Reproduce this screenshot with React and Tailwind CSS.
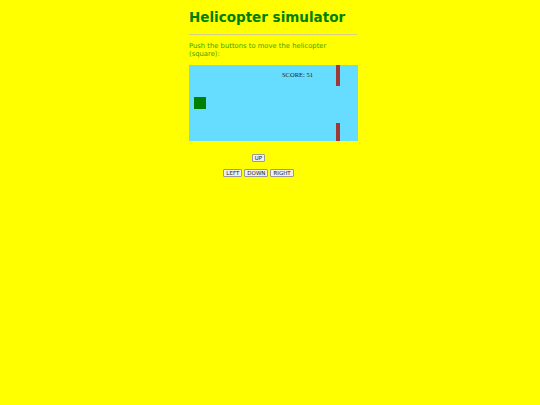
export default function App() {
    const moves = ['LEFT', 'DOWN', 'RIGHT'];
    const btn = 'h-[8px] rounded-[1px] border border-[#9a9a9a] bg-[#efefef] px-[2px] text-[5.5px] leading-[6px] text-[#222]';

    return (
        <div className="min-h-[405px] w-full bg-[#ffff00]" style={{ fontFamily: '"DejaVu Sans", Verdana, sans-serif' }}>
            <div className="ml-[189px] w-[169px] pt-[9px]">
                <h1 className="text-[13.5px] font-bold leading-[16px] text-[#008000]">Helicopter simulator</h1>
                <div className="mt-[9px] h-px w-[168px] bg-[#d6d08a]" />
                <p className="mt-[7px] text-[6.8px] leading-[8px] text-[#44a000]">
                    Push the buttons to move the helicopter (square):
                </p>

                <div className="relative mt-[7px] h-[76px] w-[169px] bg-[#66ddff]">
                    <span className="absolute left-[93px] top-[5px] text-[6.5px] text-[#222]" style={{ fontFamily: '"Liberation Serif", serif' }}>
                        SCORE: 51
                    </span>
                    <div className="absolute left-[5px] top-[32px] h-[12px] w-[12px] bg-[#008000]" />
                    <div className="absolute left-[147px] top-0 h-[21px] w-[4px] bg-[#a03838]" />
                    <div className="absolute bottom-0 left-[147px] h-[18px] w-[4px] bg-[#a03838]" />
                </div>
            </div>

            <div className="ml-[221px] mt-[13px] flex w-[75px] flex-col items-center gap-[7px]">
                <button className={btn}>UP</button>
                <div className="flex gap-[2px]">
                    {moves.map((move) => (
                        <button key={move} className={btn}>{move}</button>
                    ))}
                </div>
            </div>
        </div>
    );
}
